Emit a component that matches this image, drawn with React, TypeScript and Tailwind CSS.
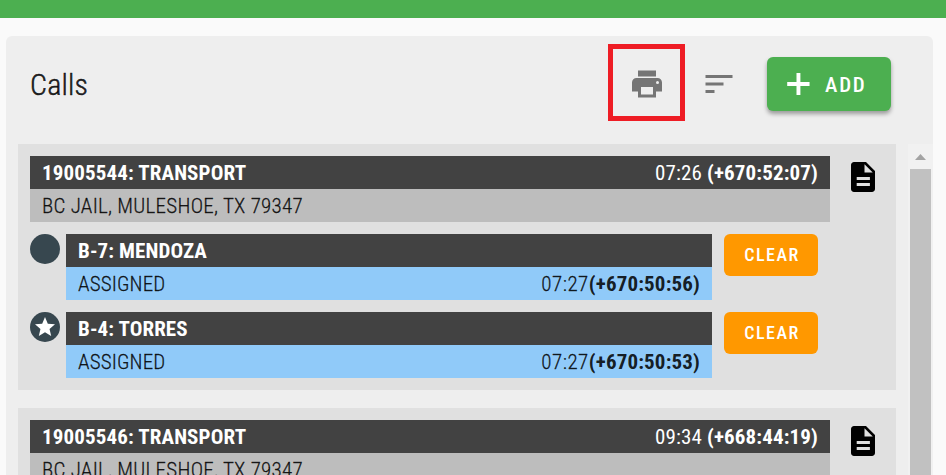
import React from "react";

function DocIcon() {
  return (
    <svg viewBox="0 0 24 24" className="h-9 w-9 fill-black">
      <path d="M14 2H6c-1.1 0-1.99.9-1.99 2L4 20c0 1.1.89 2 1.99 2H18c1.1 0 2-.9 2-2V8l-6-6zm2.6 16H7.8v-2h8.8v2zm0-4H7.8v-2h8.8v2zM13 9V3.5L18.5 9H13z" />
    </svg>
  );
}

function Unit({ name, elapsed, star }: { name: string; elapsed: string; star?: boolean }) {
  return (
    <div className="mt-3 flex h-[66px]">
      <div className="flex h-[30px] w-[30px] items-center justify-center rounded-full bg-[#37474f]">
        {star && (
          <svg viewBox="0 0 24 24" className="h-6 w-6 fill-white">
            <path d="M12 17.27 18.18 21l-1.64-7.03L22 9.24l-7.19-.61L12 2 9.19 8.63 2 9.24l5.46 4.73L5.82 21z" />
          </svg>
        )}
      </div>
      <div className="ml-1.5 w-[646px]">
        <div className="flex h-[33px] items-center bg-[#424242] px-3 pt-0.5 font-bold tracking-[0.1px] text-white">{name}</div>
        <div className="flex h-[33px] items-center justify-between bg-[#90caf9] px-3 pt-0.5 text-black/87">
          <span className="font-light tracking-[0.15px] [-webkit-text-stroke:0.3px]">ASSIGNED</span>
          <span className="tracking-[0.15px]"><span className="font-light tracking-[0.5px] [-webkit-text-stroke:0.3px]">07:27</span><b>{elapsed}</b></span>
        </div>
      </div>
      <button className="ml-3 h-[42px] w-[94px] rounded-md bg-[#ff9800] pb-0.5 pl-0.5 text-[18px] font-medium tracking-[1.5px] text-white">CLEAR</button>
    </div>
  );
}

function Call({ id, time, elapsed, children }: { id: string; time: string; elapsed: string; children?: React.ReactNode }) {
  return (
    <section className="flex w-[878px] shrink-0 bg-[#e0e0e0] p-3">
      <div className="w-[800px]">
        <div className="flex h-[33px] items-center justify-between bg-[#424242] px-3 pt-0.5 tracking-[0.13px] text-white">
          <b>{id}: TRANSPORT</b>
          <span>{time} <b>{elapsed}</b></span>
        </div>
        <div className="flex h-[33px] items-center bg-[#bdbdbd] px-3 pt-0.5 font-light tracking-[0.27px] text-black/87 [-webkit-text-stroke:0.3px]">BC JAIL, MULESHOE, TX 79347</div>
        {children}
      </div>
      <div className="ml-[15px] mt-[3px]"><DocIcon /></div>
    </section>
  );
}

export default function App() {
  return (
    <main className="h-[475px] w-[946px] overflow-hidden bg-[#fafafa] text-[21px] leading-[33px] [font-family:'Roboto_Condensed',Roboto,sans-serif] [font-stretch:75%]">
      <div className="h-[18px] bg-[#4caf50]" />
      <div className="ml-1.5 mt-[18px] h-[439px] w-[927px] rounded-t-md bg-[#eee]">
        <header className="flex h-[108px] items-center pl-6 pr-[42px]">
          <h1 className="mb-3 text-[30px] font-light tracking-[0.2px] text-black/87 [-webkit-text-stroke:0.5px]">Calls</h1>
          <div className="mb-[15px] ml-auto flex h-[77px] w-[77px] items-center justify-center border-[5px] border-[#ee1c24]">
            <svg viewBox="0 0 24 24" className="mt-[3px] h-9 w-9 fill-[#757575]">
              <path d="M18 3H6v4h12m1 5a1 1 0 0 1-1-1 1 1 0 0 1 1-1 1 1 0 0 1 1 1 1 1 0 0 1-1 1m-3 7H8v-5h8m3-6H5a3 3 0 0 0-3 3v6h4v4h12v-4h4v-6a3 3 0 0 0-3-3z" />
            </svg>
          </div>
          <svg viewBox="0 0 24 24" className="mb-3 ml-[15.5px] mr-[0.5px] h-9 w-9 fill-[#757575]">
            <path d="M3 18h6v-2H3v2M3 6v2h18V6H3m0 7h12v-2H3v2z" />
          </svg>
          <button className="mb-3 ml-[30px] flex h-[54px] w-[124px] items-center rounded-md bg-[#4caf50] pl-[13px] text-[21px] font-medium tracking-[1.8px] text-white shadow-[0_3px_4px_rgba(0,0,0,0.35)]">
            <svg viewBox="0 0 24 24" className="mr-[9px] h-9 w-9 fill-white"><path d="M19.7 13.3h-6.1v6.1h-2.6v-6.1H4.8v-2.6H11V4.6h2.6v6.1h6.1z" /></svg>
            <span className="pt-0.5">ADD</span>
          </button>
        </header>
        <div className="flex h-[331px] overflow-hidden">
          <div className="ml-3 flex flex-col gap-[18px]">
            <Call id="19005544" time="07:26" elapsed="(+670:52:07)">
              <Unit name="B-7: MENDOZA" elapsed="(+670:50:56)" />
              <Unit name="B-4: TORRES" elapsed="(+670:50:53)" star />
            </Call>
            <Call id="19005546" time="09:34" elapsed="(+668:44:19)" />
          </div>
          <div className="ml-3 flex w-[25px] flex-col items-center bg-[#f1f1f1]">
            <svg viewBox="0 0 25 25" className="h-[25px] w-[25px] shrink-0 fill-[#a3a3a3]"><path d="M7 16h11l-5.5-6z" /></svg>
            <div className="w-[21px] flex-1 bg-[#c1c1c1]" />
          </div>
        </div>
      </div>
    </main>
  );
}
